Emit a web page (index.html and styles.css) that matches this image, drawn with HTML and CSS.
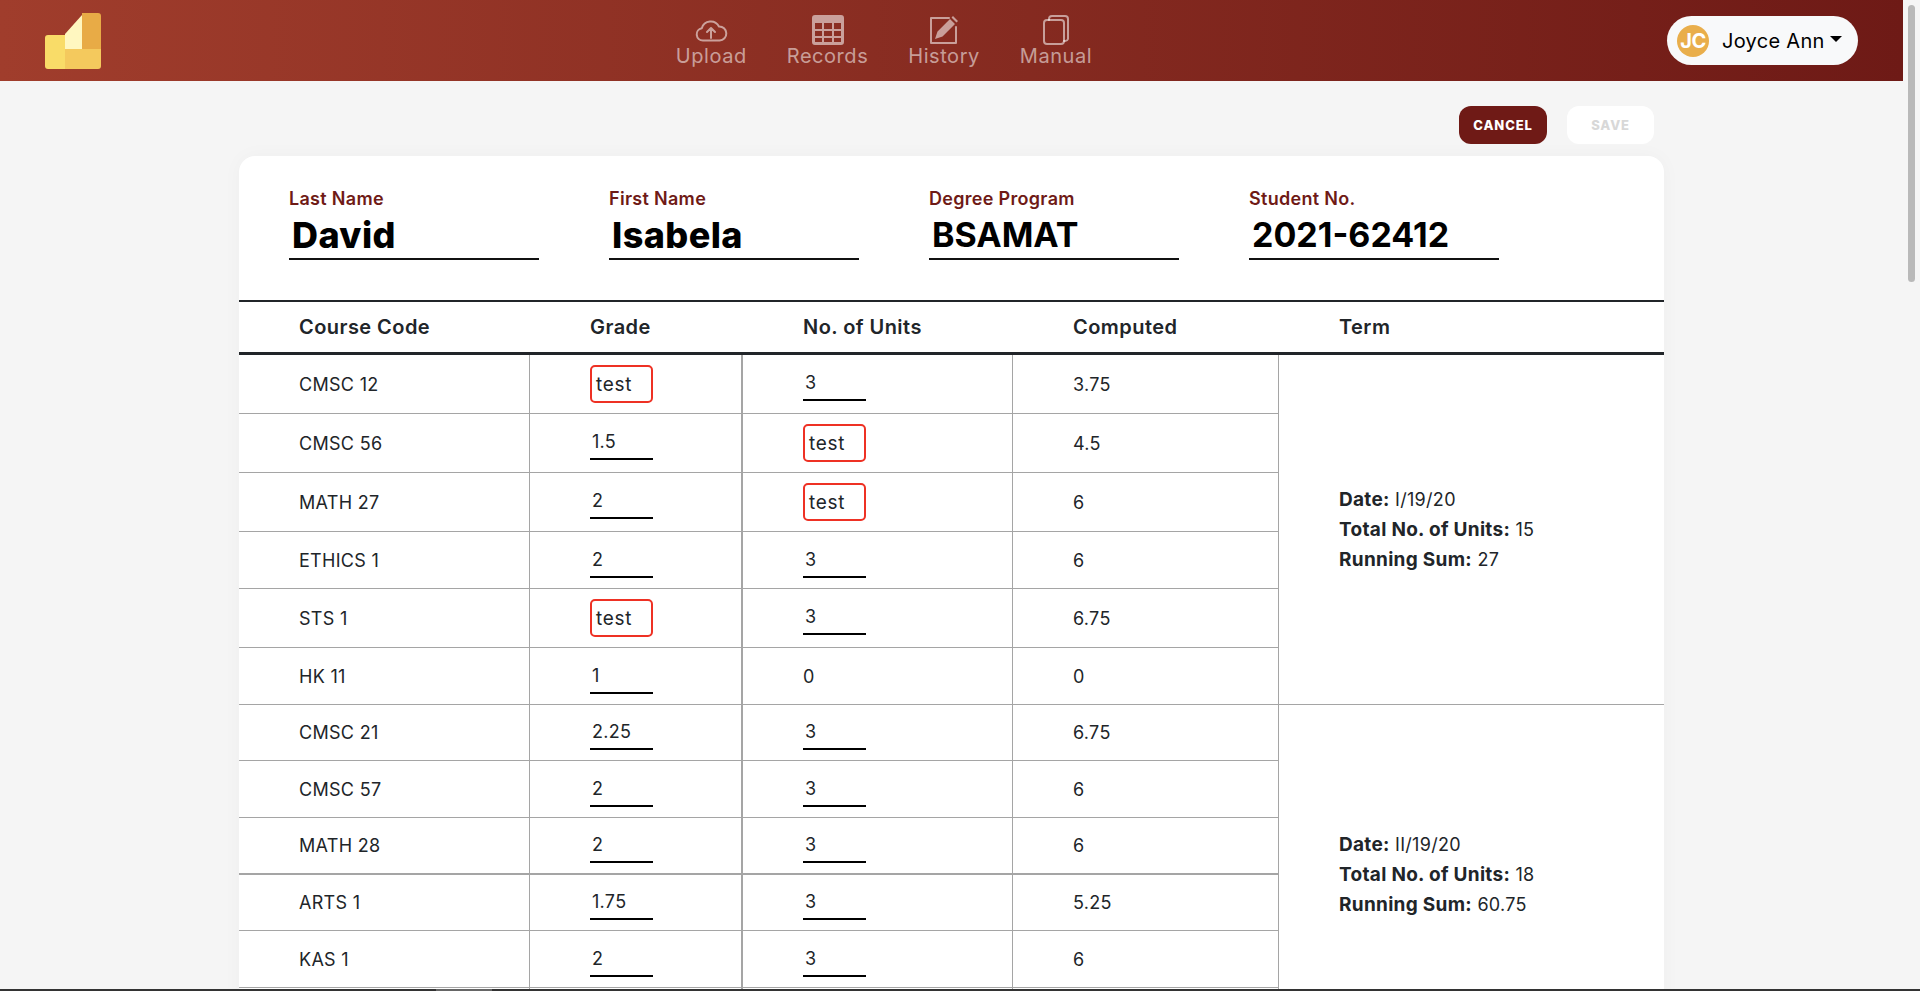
FILE: index.html
```html
<!DOCTYPE html>
<html lang="en">
<head>
<meta charset="utf-8">
<title>Records</title>
<link rel="stylesheet" href="styles.css">
</head>
<body>
<div class="window">
  <div class="viewport">
    <div class="page">
      <header class="topbar">
        <svg class="logo" viewBox="0 0 56 56" aria-hidden="true">
          <path fill="#f9dc68" d="M3 22h18v34H3a3 3 0 0 1-3-3V25a3 3 0 0 1 3-3z"/>
          <path fill="#f4c95d" d="M20 36h36v17a3 3 0 0 1-3 3H20z"/>
          <path fill="#e8ab46" d="M37 0h16a3 3 0 0 1 3 3v33H37z"/>
          <path fill="#fff7c0" d="M20 21 37 2v34H20z"/>
        </svg>
        <nav class="nav">
          <a class="nav-item">
            <svg class="nav-icon" viewBox="0 0 34 30" aria-hidden="true">
              <path class="line" d="M9 25.5a6.2 6.2 0 0 1-1.2-12.3A9.3 9.3 0 0 1 25 11.500a7 7 0 0 1 .6 14z"/>
              <path class="line" d="M17 23V13.500M13 17l4-4 4 4"/>
            </svg>
            <span>Upload</span>
          </a>
          <a class="nav-item">
            <svg class="nav-icon" viewBox="0 0 32 30" aria-hidden="true">
              <path class="solid" fill-rule="evenodd" d="M3 0h26a3 3 0 0 1 3 3v24a3 3 0 0 1-3 3H3a3 3 0 0 1-3-3V3a3 3 0 0 1 3-3zM3 8v6h7V8zm9 0v6h8V8zm10 0v6h7V8zM3 16v5h7v-5zm9 0v5h8v-5zm10 0v5h7v-5zM3 23v4h7v-4zm9 0v4h8v-4zm10 0v4h7v-4z"/>
            </svg>
            <span>Records</span>
          </a>
          <a class="nav-item">
            <svg class="nav-icon" viewBox="0 0 30 30" aria-hidden="true">
              <path class="line" d="M20 3H2v25h25V12"/>
              <path class="solid" d="M6 24l2.500-7.500L21 4l5 5-12.500 12.500zM22.500 2.500l1.500-1.500 5 5-1.500 1.500z"/>
            </svg>
            <span>History</span>
          </a>
          <a class="nav-item">
            <svg class="nav-icon" viewBox="0 0 26 30" aria-hidden="true">
              <rect class="line" x="1" y="5" width="20" height="24" rx="3"/>
              <path class="line" d="M6 5V4a3 3 0 0 1 3-3h13a3 3 0 0 1 3 3v20a3 3 0 0 1-3 2h-1"/>
            </svg>
            <span>Manual</span>
          </a>
        </nav>
        <div class="user">
          <span class="avatar">JC</span>
          <span class="user-name">Joyce Ann</span>
          <span class="caret"></span>
        </div>
      </header>

      <main class="content">
        <div class="actions">
          <button class="btn btn-cancel">CANCEL</button>
          <button class="btn btn-save">SAVE</button>
        </div>
        <section class="card">
          <div class="fields">
            <div class="field"><div class="field-label">Last Name</div><div class="field-value name">David</div></div>
            <div class="field"><div class="field-label">First Name</div><div class="field-value name">Isabela</div></div>
            <div class="field"><div class="field-label">Degree Program</div><div class="field-value">BSAMAT</div></div>
            <div class="field"><div class="field-label">Student No.</div><div class="field-value">2021-62412</div></div>
          </div>
          <table class="grades">
            <colgroup>
              <col class="col-a"><col class="col-b"><col class="col-c"><col class="col-d"><col class="col-e">
            </colgroup>
            <thead>
              <tr><th>Course Code</th><th>Grade</th><th>No. of Units</th><th>Computed</th><th>Term</th></tr>
            </thead>
            <tbody>
              <tr>
                <td>CMSC 12</td><td class="in"><div class="err">test</div></td><td class="in"><div class="ok">3</div></td><td>3.75</td>
                <td class="term" rowspan="6"><p><b>Date:</b> I/19/20</p><p><b>Total No. of Units:</b> 15</p><p><b>Running Sum:</b> 27</p></td>
              </tr>
              <tr><td>CMSC 56</td><td class="in"><div class="ok">1.5</div></td><td class="in"><div class="err">test</div></td><td>4.5</td></tr>
              <tr><td>MATH 27</td><td class="in"><div class="ok">2</div></td><td class="in"><div class="err">test</div></td><td>6</td></tr>
              <tr><td>ETHICS 1</td><td class="in"><div class="ok">2</div></td><td class="in"><div class="ok">3</div></td><td>6</td></tr>
              <tr><td>STS 1</td><td class="in"><div class="err">test</div></td><td class="in"><div class="ok">3</div></td><td>6.75</td></tr>
              <tr><td>HK 11</td><td class="in"><div class="ok">1</div></td><td>0</td><td>0</td></tr>
              <tr class="tight">
                <td>CMSC 21</td><td class="in"><div class="ok">2.25</div></td><td class="in"><div class="ok">3</div></td><td>6.75</td>
                <td class="term" rowspan="6"><p><b>Date:</b> II/19/20</p><p><b>Total No. of Units:</b> 18</p><p><b>Running Sum:</b> 60.75</p></td>
              </tr>
              <tr><td>CMSC 57</td><td class="in"><div class="ok">2</div></td><td class="in"><div class="ok">3</div></td><td>6</td></tr>
              <tr class="tight thick"><td>MATH 28</td><td class="in"><div class="ok">2</div></td><td class="in"><div class="ok">3</div></td><td>6</td></tr>
              <tr class="tight"><td>ARTS 1</td><td class="in"><div class="ok">1.75</div></td><td class="in"><div class="ok">3</div></td><td>5.25</td></tr>
              <tr><td>KAS 1</td><td class="in"><div class="ok">2</div></td><td class="in"><div class="ok">3</div></td><td>6</td></tr>
              <tr class="blank"><td></td><td></td><td></td><td></td></tr>
            </tbody>
          </table>
        </section>
      </main>
    </div>
    <aside class="scrollbar"><div class="thumb"></div></aside>
  </div>
  <div class="edge"><div class="edge-mark"></div></div>
</div>
</body>
</html>
```
FILE: styles.css
```css
* { box-sizing: border-box; }
html, body { margin: 0; height: 100%; overflow: hidden; }
body {
  font-family: Inter, "Liberation Sans", sans-serif;
  font-size: 18px;
  color: #212529;
  background: #f5f5f5;
}
.window { height: 991px; display: flex; flex-direction: column; }
.viewport { flex: 1; min-height: 0; display: flex; }
.page { flex: 1; min-width: 0; overflow: hidden; }
.scrollbar { width: 17px; flex: none; padding: 5px 5px 0 5px; background: #f5f5f5; }
.thumb { width: 7px; height: 277px; border-radius: 4px; background: #b9b9b9; }
.edge { height: 2px; flex: none; background: #333; }
.edge-mark { width: 56px; height: 2px; margin-left: 436px; background: #666; }

.topbar {
  height: 81px;
  display: flex;
  align-items: flex-start;
  justify-content: space-between;
  padding: 0 45px;
  background: linear-gradient(90deg, #a03d2c 0%, #6e1a16 100%);
}
.logo { width: 56px; height: 56px; margin-top: 13px; flex: none; }
.nav { display: flex; gap: 40px; padding-top: 15px; }
.nav-item {
  display: flex;
  flex-direction: column;
  align-items: center;
  color: rgba(255, 255, 255, 0.55);
  font-size: 20px;
  line-height: 23px;
  letter-spacing: 0.55px;
}
.nav-icon { height: 30px; display: block; fill: none; }
.nav-icon .line { fill: none; stroke: rgba(255, 255, 255, 0.55); stroke-width: 2; stroke-linecap: round; stroke-linejoin: round; }
.nav-icon .solid { fill: rgba(255, 255, 255, 0.55); }
.user {
  margin-top: 16px;
  width: 191px;
  height: 49px;
  display: flex;
  align-items: center;
  padding-left: 10px;
  border-radius: 25px;
  background: #f8f9fa;
  color: #000;
}
.avatar {
  width: 32px;
  height: 32px;
  flex: none;
  display: flex;
  align-items: center;
  justify-content: center;
  border-radius: 50%;
  background: #e9ae4b;
  color: #fff;
  font-size: 20px;
  font-weight: 700;
  letter-spacing: -0.5px;
}
.user-name { margin-left: 13px; font-size: 20px; letter-spacing: 0.3px; white-space: nowrap; }
.caret {
  margin: -4px 0 0 5px;
  border-top: 6px solid #000;
  border-left: 6px solid transparent;
  border-right: 6px solid transparent;
}

.content { width: 1425px; margin: 0 auto; }
.actions { display: flex; justify-content: flex-end; gap: 20px; padding: 25px 10px 12px 0; }
.btn {
  width: 88px;
  height: 38px;
  border: 0;
  border-radius: 12px;
  font-family: inherit;
  font-size: 13px;
  font-weight: 800;
  letter-spacing: 0.85px;
  padding: 0;
}
.btn-cancel { background: #6f1a16; color: #fff; }
.btn-save { width: 87px; background: #fff; color: #d8d8d8; }
.card {
  background: #fff;
  border-radius: 16px 16px 0 0;
  box-shadow: 0 0 20px rgba(0, 0, 0, 0.03);
  padding-top: 30px;
}
.fields { display: flex; gap: 70px; padding: 0 0 40px 50px; }
.field { width: 250px; }
.field-label { height: 24px; line-height: 25px; font-size: 18px; letter-spacing: 0.3px; font-weight: 600; color: #6f1a16; white-space: nowrap; }
.field-value {
  height: 50px;
  line-height: 50px;
  padding-left: 3px;
  border-bottom: 2px solid #111;
  font-size: 34px;
  font-weight: 700;
  color: #000;
  white-space: nowrap;
}
.field-value.name { font-size: 36px; font-weight: 800; letter-spacing: 0.4px; }

.grades { width: 1425px; table-layout: fixed; border-collapse: separate; border-spacing: 0; }
.col-a { width: 291px; }
.col-b { width: 213px; }
.col-c { width: 270px; }
.col-d { width: 266px; }
.col-e { width: 385px; }
.grades th {
  height: 55px;
  padding: 0 0 0 60px;
  text-align: left;
  font-size: 20px;
  font-weight: 600;
  letter-spacing: 0.45px;
  border-top: 2px solid #212529;
  border-bottom: 3px solid #212529;
  color: #212529;
}
.grades td {
  padding: 0 0 0 60px;
  border-bottom: 1px solid #a5a5a5;
  border-right: 1px solid #a5a5a5;
  vertical-align: middle;
  letter-spacing: 0.3px;
}
.grades td:nth-child(2) { border-right-width: 2px; }
.grades td.in { padding-top: 10px; padding-bottom: 10px; vertical-align: top; }
.grades .tight td.in { padding-top: 9px; }
.grades .thick td { border-bottom-width: 2px; }
.grades td.term { border-right: 0; line-height: 30px; }
.term p { margin: 0; }
.term b { font-size: 19px; font-weight: 700; letter-spacing: 0.3px; }
.blank td { height: 57px; }
.ok {
  width: 63px;
  height: 36px;
  line-height: 36px;
  padding-left: 2px;
  border-bottom: 2px solid #000;
}
.err {
  width: 63px;
  height: 38px;
  line-height: 35px;
  padding-left: 4px;
  font-size: 19px;
  letter-spacing: 0.7px;
  border: 2px solid #ee3124;
  border-radius: 5px;
}
```
